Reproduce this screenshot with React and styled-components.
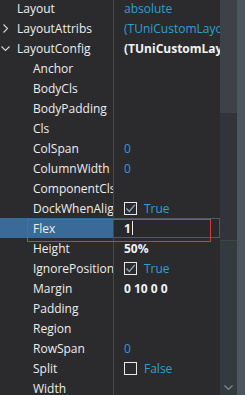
import React from 'react';
import styled, {createGlobalStyle} from 'styled-components';

const Global = createGlobalStyle`
    html, body {
        margin: 0;
        padding: 0;
        background: #2b2b2e;
        overflow: hidden;
    }
`;

const Frame = styled.div`
    display: flex;
    width: 245px;
    height: 395px;
    overflow: hidden;
    background: #2b2b2e;
    font-family: 'Open Sans', 'Noto Sans', sans-serif;
    font-size: 12px;
    color: #ededed;
`;

const Grid = styled.div`
    position: relative;
    width: 220px;
    flex-shrink: 0;
    overflow: hidden;
`;

const Rows = styled.div`
    display: flex;
    flex-direction: column;
    margin-top: -2px;
`;

const Row = styled.div`
    display: grid;
    grid-template-columns: 113px 1px 1fr;
    height: 20px;
`;

const Name = styled.div`
    display: flex;
    align-items: center;
    padding-left: ${p => p.level ? 33 : 17}px;
    position: relative;
    white-space: nowrap;
    overflow: hidden;
    background: ${p => p.selected ? '#3a6a98' : 'transparent'};
`;

const Arrow = styled.svg`
    position: absolute;
    left: 1px;
    top: 6px;
`;

const Divider = styled.div`
    background: #47474c;
`;

const Value = styled.div`
    display: flex;
    align-items: center;
    gap: 7px;
    padding-left: 10px;
    white-space: nowrap;
    overflow: hidden;
    color: ${p => p.tone === 'blue' ? '#2f9fd3' : '#f2f2f2'};
    font-weight: ${p => p.bold ? 700 : 400};
`;

const Editor = styled.div`
    display: flex;
    align-items: center;
    padding-left: 10px;
    background: #29292c;
    border: 1px solid #4a5a66;
    border-left: none;
    font-weight: 700;
    color: #f5f5f5;
`;

const Caret = styled.span`
    display: inline-block;
    width: 1px;
    height: 14px;
    margin-left: 1px;
    background: #f0f0f0;
`;

const Check = styled.span`
    display: inline-flex;
    align-items: center;
    justify-content: center;
    width: 13px;
    height: 13px;
    box-sizing: border-box;
    border: 1px solid #e8e8e8;
`;

const BoolText = styled.span`
    color: #2f9fd3;
    font-weight: 400;
`;

const Marker = styled.div`
    position: absolute;
    left: 27px;
    top: 219px;
    width: 182px;
    height: 21px;
    border: 1px solid #d23a44;
    pointer-events: none;
`;

const Scroll = styled.div`
    display: flex;
    flex: 1;
    height: 100%;
`;

const Track = styled.div`
    position: relative;
    width: 17px;
    background: #31353a;
`;

const Thumb = styled.div`
    height: 113px;
    background: #3c4247;
`;

const Lower = styled.div`
    position: absolute;
    left: 0;
    right: 0;
    top: 240px;
    bottom: 0;
    background: #343b3e;
    border-top: 1px solid #3e464b;
`;

const DownArrow = styled.svg`
    position: absolute;
    left: 4px;
    bottom: 4px;
`;

const Edge = styled.div`
    flex: 1;
    background: #4b565f;
`;

const rows = [
    {name: 'Layout', value: 'absolute', tone: 'blue'},
    {name: 'LayoutAttribs', value: '(TUniCustomLayo', tone: 'blue', arrow: 'right'},
    {name: 'LayoutConfig', value: '(TUniCustomLayo', bold: true, arrow: 'down'},
    {name: 'Anchor', level: 1},
    {name: 'BodyCls', level: 1},
    {name: 'BodyPadding', level: 1},
    {name: 'Cls', level: 1},
    {name: 'ColSpan', level: 1, value: '0', tone: 'blue'},
    {name: 'ColumnWidth', level: 1, value: '0', tone: 'blue'},
    {name: 'ComponentCls', level: 1},
    {name: 'DockWhenAligned', level: 1, check: true},
    {name: 'Flex', level: 1, edit: '1'},
    {name: 'Height', level: 1, value: '50%', bold: true},
    {name: 'IgnorePosition', level: 1, check: true},
    {name: 'Margin', level: 1, value: '0 10 0 0', bold: true},
    {name: 'Padding', level: 1},
    {name: 'Region', level: 1},
    {name: 'RowSpan', level: 1, value: '0', tone: 'blue'},
    {name: 'Split', level: 1, check: false},
    {name: 'Width', level: 1},
];

function Chevron({dir}) {
    return (
        <Arrow width="9" height="9" viewBox="0 0 9 9">
            {dir === 'right'
                ? <path d="M2.5 0.5 L6.5 4.5 L2.5 8.5" fill="none" stroke="#d8d8d8" strokeWidth="1.1"/>
                : <path d="M0.5 2.5 L4.5 6.5 L8.5 2.5" fill="none" stroke="#d8d8d8" strokeWidth="1.1"/>}
        </Arrow>
    );
}

function Cell({row}) {
    if (row.edit) {
        return <Editor>{row.edit}<Caret/></Editor>;
    }
    if (row.check !== undefined) {
        return (
            <Value>
                <Check>
                    {row.check && (
                        <svg width="11" height="11" viewBox="0 0 11 11">
                            <path d="M1.5 5.5 L4.3 8.5 L9.8 1.8" fill="none" stroke="#8fa6bd" strokeWidth="1.3"/>
                        </svg>
                    )}
                </Check>
                <BoolText>{row.check ? 'True' : 'False'}</BoolText>
            </Value>
        );
    }
    return <Value tone={row.tone} bold={row.bold}>{row.value}</Value>;
}

export default function App() {
    return (
        <Frame>
            <Global/>
            <Grid>
                <Rows>
                    {rows.map(row => (
                        <Row key={row.name}>
                            <Name level={row.level} selected={!!row.edit}>
                                {row.arrow && <Chevron dir={row.arrow}/>}
                                {row.name}
                            </Name>
                            <Divider/>
                            <Cell row={row}/>
                        </Row>
                    ))}
                </Rows>
                <Marker/>
            </Grid>
            <Scroll>
                <Track>
                    <Thumb/>
                    <Lower>
                        <DownArrow width="9" height="6" viewBox="0 0 9 6">
                            <path d="M0.5 0.5 L4.5 4.5 L8.5 0.5" fill="none" stroke="#7d8a94" strokeWidth="1.2"/>
                        </DownArrow>
                    </Lower>
                </Track>
                <Edge/>
            </Scroll>
        </Frame>
    );
}
